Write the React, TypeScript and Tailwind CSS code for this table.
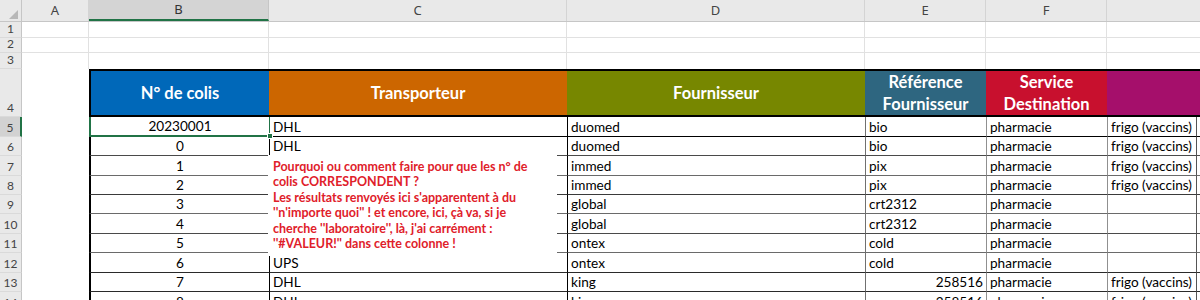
import React from "react";

// Excel-like sheet: "suivi des colis" with a comment box over column C

interface Row {
  n: number;
  h: string;
  b: string;
  c: string;
  d: string;
  e: string;
  eRight?: boolean;
  f: string;
  g: string;
  line: string;
}

const rows: Row[] = [
  { n: 5, h: "h-[20px]", b: "20230001", c: "DHL", d: "duomed", e: "bio", f: "pharmacie", g: "frigo (vaccins)", line: "border-b-black" },
  { n: 6, h: "h-[19px]", b: "0", c: "DHL", d: "duomed", e: "bio", f: "pharmacie", g: "frigo (vaccins)", line: "border-b-[#4a4a4a]" },
  { n: 7, h: "h-[20px]", b: "1", c: "", d: "immed", e: "pix", f: "pharmacie", g: "frigo (vaccins)", line: "border-b-[#6a6a6a]" },
  { n: 8, h: "h-[19px]", b: "2", c: "", d: "immed", e: "pix", f: "pharmacie", g: "frigo (vaccins)", line: "border-b-[#3a3a3a]" },
  { n: 9, h: "h-[19px]", b: "3", c: "", d: "global", e: "crt2312", f: "pharmacie", g: "", line: "border-b-[#6a6a6a]" },
  { n: 10, h: "h-[20px]", b: "4", c: "", d: "global", e: "crt2312", f: "pharmacie", g: "", line: "border-b-[#4a4a4a]" },
  { n: 11, h: "h-[19px]", b: "5", c: "", d: "ontex", e: "cold", f: "pharmacie", g: "", line: "border-b-[#6a6a6a]" },
  { n: 12, h: "h-[20px]", b: "6", c: "UPS", d: "ontex", e: "cold", f: "pharmacie", g: "", line: "border-b-[#2a2a2a]" },
  { n: 13, h: "h-[19px]", b: "7", c: "DHL", d: "king", e: "258516", eRight: true, f: "pharmacie", g: "frigo (vaccins)", line: "border-b-[#2a2a2a]" },
  { n: 14, h: "h-[20px]", b: "8", c: "DHL", d: "king", e: "258516", eRight: true, f: "pharmacie", g: "frigo (vaccins)", line: "border-b-[#4a4a4a]" },
];

const RowNum: React.FC<{ n: number; h: string; selected?: boolean }> = ({ n, h, selected }) => (
  <div
    className={`${h} w-[22px] shrink-0 flex items-end justify-center pb-[1px] text-[12px] leading-[14px] text-[#444] border-b border-b-[#dadada] ${
      selected ? "bg-[#d2d2d2] border-r-2 border-r-[#217346]" : "bg-[#e9e9e9] border-r border-r-[#c6c6c6]"
    }`}
  >
    {n}
  </div>
);

const EmptyRow: React.FC<{ n: number; h: string; last?: boolean }> = ({ n, h, last }) => {
  const cell = `${h} border-r border-[#e1e1e1] ${last ? "" : "border-b"}`;
  return (
    <div className="flex">
      <RowNum n={n} h={h} />
      <div className={`${cell} w-[67px]`} />
      <div className={`${cell} w-[180px]`} />
      <div className={`${cell} w-[298px]`} />
      <div className={`${cell} w-[298px]`} />
      <div className={`${cell} w-[121px]`} />
      <div className={`${cell} w-[121px]`} />
      <div className={`${h} flex-1 ${last ? "" : "border-b border-[#e1e1e1]"}`} />
    </div>
  );
};

const App: React.FC = () => {
  return (
    <div className="relative w-[1200px] h-[300px] overflow-hidden bg-white font-['Lato','Noto_Sans',sans-serif] text-black">
      {/* column letters */}
      <div className="flex h-[22px] bg-[#e9e9e9] border-b border-[#c6c6c6] text-[13px] text-[#444] font-['Noto_Sans',sans-serif]">
        <div className="w-[22px] shrink-0 border-r border-[#c6c6c6] flex items-end justify-end pr-[3px] pb-[2px]">
          <svg width="9" height="9" viewBox="0 0 9 9">
            <polygon points="9,0 9,9 0,9" fill="#b8b8b8" />
          </svg>
        </div>
        <div className="w-[67px] border-r border-[#d4d4d4] flex items-center justify-center">A</div>
        <div className="w-[180px] bg-[#d4d4d4] border-b-2 border-[#217346] border-r border-r-[#c6c6c6] flex items-center justify-center text-[#333]">
          B
        </div>
        <div className="w-[298px] border-r border-[#d4d4d4] flex items-center justify-center">C</div>
        <div className="w-[298px] border-r border-[#d4d4d4] flex items-center justify-center">D</div>
        <div className="w-[121px] border-r border-[#d4d4d4] flex items-center justify-center">E</div>
        <div className="w-[121px] border-r border-[#d4d4d4] flex items-center justify-center">F</div>
        <div className="flex-1" />
      </div>

      <EmptyRow n={1} h="h-[16px]" />
      <EmptyRow n={2} h="h-[15px]" />
      <EmptyRow n={3} h="h-[16px]" last />

      {/* header row */}
      <div className="flex h-[48px]">
        <RowNum n={4} h="h-[48px]" />
        <div className="w-[67px] shrink-0" />
        <div className="flex flex-1 border-t-2 border-b-2 border-l-2 border-black text-white font-bold text-[16.5px] leading-[22px]">
          <div className="w-[178px] bg-[#0068b9] flex items-center justify-center">N° de colis</div>
          <div className="w-[298px] bg-[#cc6600] flex items-center justify-center">Transporteur</div>
          <div className="w-[298px] bg-[#778700] flex items-center justify-center">Fournisseur</div>
          <div className="w-[121px] bg-[#2e6680] flex items-center justify-center text-center">
            Référence
            <br />
            Fournisseur
          </div>
          <div className="w-[121px] bg-[#c8102e] flex items-center justify-center text-center">
            Service
            <br />
            Destination
          </div>
          <div className="flex-1 bg-[#a50f6b]" />
        </div>
      </div>

      {/* data rows */}
      {rows.map((r) => {
        const first = r.n === 5;
        return (
          <div key={r.n} className="flex text-[13.6px] leading-[18px]">
            <RowNum n={r.n} h={r.h} selected={first} />
            <div className={`${r.h} w-[67px] shrink-0`} />
            <div
              className={`${r.h} relative w-[180px] shrink-0 flex items-center justify-center ${
                first
                  ? "border-l-2 border-b-2 border-[#217346]"
                  : `border-l-2 border-l-black border-b ${r.line}`
              }`}
            >
              {r.b}
              {first && (
                <span className="absolute -right-[4px] -bottom-[4px] w-[6px] h-[6px] bg-[#217346] border border-white z-10" />
              )}
            </div>
            <div
              className={`${r.h} w-[298px] shrink-0 pl-[3px] flex items-center border-b ${r.line} border-l ${
                first ? "border-l-[#217346]" : "border-l-black"
              }`}
            >
              {r.c}
            </div>
            <div className={`${r.h} w-[298px] shrink-0 pl-[3px] flex items-center border-b ${r.line} border-l border-l-black`}>
              {r.d}
            </div>
            <div
              className={`${r.h} w-[121px] shrink-0 px-[3px] flex items-center border-b ${r.line} border-l border-l-[#707070] ${
                r.eRight ? "justify-end" : ""
              }`}
            >
              {r.e}
            </div>
            <div className={`${r.h} w-[121px] shrink-0 pl-[3px] flex items-center border-b ${r.line} border-l border-l-[#909090]`}>
              {r.f}
            </div>
            <div
              className={`${r.h} w-[90px] shrink-0 pl-[3px] flex items-center whitespace-nowrap border-b ${r.line} border-l border-l-[#909090] border-r border-r-[#555]`}
            >
              {r.g}
            </div>
            <div className={`${r.h} flex-1 border-b ${r.line}`} />
          </div>
        );
      })}

      {/* comment text box lying over column C */}
      <div className="absolute left-[268px] top-[155px] w-[289px] h-[101px] bg-white pl-[5px] pt-[4px] text-[#e0202a] font-bold text-[12.5px] leading-[15.4px]">
        Pourquoi ou comment faire pour que les n° de
        <br />
        colis CORRESPONDENT ?
        <br />
        Les résultats renvoyés ici s'apparentent à du
        <br />
        ''n'importe quoi'' ! et encore, ici, çà va, si je
        <br />
        cherche ''laboratoire'', là, j'ai carrément :
        <br />
        ''#VALEUR!'' dans cette colonne !
      </div>
    </div>
  );
};

export default App;
